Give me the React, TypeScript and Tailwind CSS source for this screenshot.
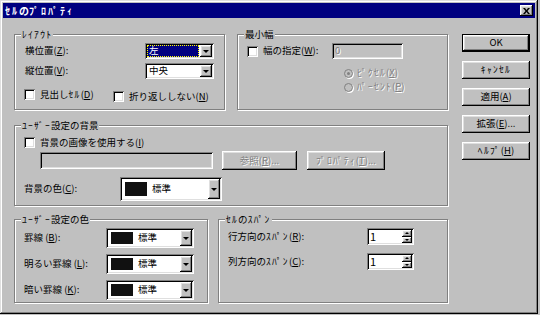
import React from "react";

// Win98 bevels
const raised =
  "shadow-[inset_-1px_-1px_0_#000,inset_1px_1px_0_#fff,inset_-2px_-2px_0_#808080,inset_2px_2px_0_#dfdfdf]";
const sunken =
  "shadow-[inset_1px_1px_0_#808080,inset_-1px_-1px_0_#fff,inset_2px_2px_0_#000,inset_-2px_-2px_0_#dfdfdf]";
const disabledText = "text-[#808080] [text-shadow:1px_1px_0_#fff]";

// half-width katakana runs are rendered wider in the original UI font
function K({ children }: { children: React.ReactNode }) {
  return <span className="tracking-[1.3px]">{children}</span>;
}

function Group({ title, className, children }: { title: React.ReactNode; className: string; children?: React.ReactNode }) {
  return (
    <div className={`border border-[#808080] shadow-[1px_1px_0_#fff,inset_1px_1px_0_#fff] ${className}`}>
      <div className="-mt-[7px] ml-[6px] w-fit bg-[#c0c0c0] px-[1px] leading-[12px]">{title}</div>
      {children}
    </div>
  );
}

function Check() {
  return <span className={`block w-[11px] h-[11px] shrink-0 bg-white ${sunken}`} />;
}

function Radio({ checked }: { checked?: boolean }) {
  return (
    <span className="flex w-[9px] h-[9px] shrink-0 items-center justify-center rounded-full border border-[#808080] bg-[#c0c0c0] shadow-[1px_1px_0_#fff]">
      {checked && <span className="block w-[3px] h-[3px] rounded-full bg-[#808080]" />}
    </span>
  );
}

function DropBtn() {
  return (
    <span className={`flex w-[12px] self-stretch shrink-0 items-center justify-center bg-[#c0c0c0] ${raised}`}>
      <span className="block border-x-[3px] border-t-[3px] border-x-transparent border-t-black" />
    </span>
  );
}

function ColorCombo({ className, swatch }: { className: string; swatch: string }) {
  return (
    <div className={`flex items-stretch bg-white p-[2px] ${sunken} ${className}`}>
      <div className="flex flex-1 items-center">
        <span className={`block w-[22px] bg-[#111] ${swatch}`} />
        <span className="ml-[5px]">標準</span>
      </div>
      <DropBtn />
    </div>
  );
}

function Spinner() {
  return (
    <div className={`flex w-[47px] h-[17px] items-stretch bg-white p-[2px] ${sunken}`}>
      <span className="flex-1 pl-[1px] text-[11px] leading-[13px]">1</span>
      <div className="flex w-[10px] flex-col">
        <span className={`flex flex-1 items-center justify-center bg-[#c0c0c0] ${raised}`}>
          <span className="block border-x-[2px] border-b-[2px] border-x-transparent border-b-black" />
        </span>
        <span className={`flex flex-1 items-center justify-center bg-[#c0c0c0] ${raised}`}>
          <span className="block border-x-[2px] border-t-[2px] border-x-transparent border-t-black" />
        </span>
      </div>
    </div>
  );
}

function Button({ children, isDefault, disabled, className = "" }: { children: React.ReactNode; isDefault?: boolean; disabled?: boolean; className?: string }) {
  return (
    <div className={`${isDefault ? "border border-black" : ""} ${className}`}>
      <div className={`flex h-full items-center justify-center bg-[#c0c0c0] ${raised} ${disabled ? disabledText : ""}`}>
        {children}
      </div>
    </div>
  );
}

export default function App() {
  return (
    <div className="w-[540px] h-[315px] overflow-hidden bg-[#c0c0c0] font-['Noto_Sans_CJK_JP','Noto_Sans',sans-serif] text-[9.5px] leading-none text-black">
      <div className="flex w-[538px] h-[314px] flex-col p-[3px] shadow-[inset_-1px_-1px_0_#000,inset_1px_1px_0_#dfdfdf,inset_-2px_-2px_0_#808080,inset_2px_2px_0_#fff]">
        {/* TITLE BAR */}
        <div className="flex h-[15px] items-center justify-between bg-[#000080] pl-[2px] pr-[2px]">
          <span className="text-[10px] font-bold text-white">
            <span className="tracking-[2px]">ｾﾙ</span>の<span className="tracking-[2px]">ﾌﾟﾛﾊﾟﾃｨ</span>
          </span>
          <span className={`flex w-[13px] h-[11px] items-center justify-center bg-[#c0c0c0] ${raised}`}>
            <svg width="7" height="6" viewBox="0 0 7 6">
              <path d="M0 0h2l1.5 2L5 0h2L4.5 3 7 6H5L3.5 4 2 6H0l2.5-3z" fill="#000" />
            </svg>
          </span>
        </div>

        <div className="flex">
          {/* LEFT COLUMN */}
          <div className="ml-[11px] mt-[16px] flex w-[434px] flex-col">
            <div className="flex gap-[12px]">
              <Group title={<K>ﾚｲｱｳﾄ</K>} className="w-[211px] h-[76px]">
                <div className="mt-[3px] flex h-[16px] items-center pl-[10px]">
                  <span className="w-[120px]">
                    横位置(<u>Z</u>):
                  </span>
                  <div className={`flex w-[69px] h-[16px] items-stretch bg-white p-[2px] ${sunken}`}>
                    <div className="flex flex-1 items-center pr-[1px]">
                      <div className="flex h-full flex-1 items-center border border-dotted border-[#ffff00] bg-[#000080] pl-[1px] text-white">
                        左
                      </div>
                    </div>
                    <DropBtn />
                  </div>
                </div>
                <div className="mt-[4px] flex h-[16px] items-center pl-[10px]">
                  <span className="w-[120px]">
                    縦位置(<u>V</u>):
                  </span>
                  <div className={`flex w-[69px] h-[16px] items-stretch bg-white p-[2px] ${sunken}`}>
                    <div className="flex flex-1 items-center pl-[2px]">中央</div>
                    <DropBtn />
                  </div>
                </div>
                <div className="mt-[10px] flex items-start pl-[9px]">
                  <div className="flex w-[89px] items-center gap-[5px]">
                    <Check />
                    <span>
                      見出し<K>ｾﾙ</K>(<u>D</u>)
                    </span>
                  </div>
                  <div className="mt-[2px] flex items-center gap-[5px]">
                    <Check />
                    <span>
                      折り返ししない(<u>N</u>)
                    </span>
                  </div>
                </div>
              </Group>

              <Group title="最小幅" className="w-[211px] h-[76px]">
                <div className="mt-[3px] flex h-[16px] items-center pl-[9px]">
                  <div className="flex w-[85px] items-center gap-[5px]">
                    <Check />
                    <span>
                      幅の指定(<u>W</u>):
                    </span>
                  </div>
                  <div className={`flex w-[71px] h-[16px] items-center bg-[#c0c0c0] pl-[3px] ${sunken} ${disabledText}`}>0</div>
                </div>
                <div className={`mt-[8px] flex h-[12px] items-center gap-[4px] pl-[106px] ${disabledText}`}>
                  <Radio checked />
                  <span>
                    <K>ﾋﾟｸｾﾙ</K>(<u>X</u>)
                  </span>
                </div>
                <div className={`mt-[2px] flex h-[12px] items-center gap-[4px] pl-[106px] ${disabledText}`}>
                  <Radio />
                  <span>
                    <K>ﾊﾟｰｾﾝﾄ</K>(<u>P</u>)
                  </span>
                </div>
              </Group>
            </div>

            <Group title={<><K>ﾕｰｻﾞｰ</K>設定の背景</>} className="mt-[15px] w-[434px] h-[81px]">
              <div className="mt-[6px] flex h-[11px] items-center gap-[5px] pl-[9px]">
                <Check />
                <span>
                  背景の画像を使用する(<u>I</u>)
                </span>
              </div>
              <div className="mt-[3px] flex h-[19px] items-center pl-[25px]">
                <div className={`w-[173px] h-[17px] bg-[#c0c0c0] ${sunken}`} />
                <Button disabled className="ml-[9px] w-[75px] h-[19px]">
                  参照(<u>R</u>)...
                </Button>
                <Button disabled className="ml-[10px] w-[78px] h-[19px]">
                  <K>ﾌﾟﾛﾊﾟﾃｨ</K>(<u>T</u>)...
                </Button>
              </div>
              <div className="mt-[7px] flex h-[24px] items-center pl-[9px]">
                <span className="w-[96px]">
                  背景の色(<u>C</u>):
                </span>
                <ColorCombo className="w-[102px] h-[24px]" swatch="h-[14px] ml-[3px]" />
              </div>
            </Group>

            <div className="mt-[13px] flex gap-[10px]">
              <Group title={<><K>ﾕｰｻﾞｰ</K>設定の色</>} className="w-[194px] h-[84px]">
                {[
                  { label: "罫線 ", key: "B", mt: "mt-[3px]" },
                  { label: "明るい罫線 ", key: "L", mt: "mt-[6px]" },
                  { label: "暗い罫線 ", key: "K", mt: "mt-[6px]" },
                ].map((row) => (
                  <div key={row.key} className={`${row.mt} flex h-[20px] items-center pl-[9px]`}>
                    <span className="w-[82px]">
                      {row.label}(<u>{row.key}</u>):
                    </span>
                    <ColorCombo className="w-[88px] h-[20px]" swatch="h-[12px] ml-[3px]" />
                  </div>
                ))}
              </Group>

              <Group title={<><K>ｾﾙ</K>の<K>ｽﾊﾟﾝ</K></>} className="w-[230px] h-[84px]">
                <div className="mt-[3px] flex h-[17px] items-center pl-[9px]">
                  <span className="w-[139px]">
                    行方向の<K>ｽﾊﾟﾝ</K>(<u>R</u>):
                  </span>
                  <Spinner />
                </div>
                <div className="mt-[8px] flex h-[17px] items-center pl-[9px]">
                  <span className="w-[139px]">
                    列方向の<K>ｽﾊﾟﾝ</K>(<u>C</u>):
                  </span>
                  <Spinner />
                </div>
              </Group>
            </div>
          </div>

          {/* RIGHT BUTTONS */}
          <div className="ml-[14px] mt-[16px] flex w-[68px] flex-col gap-[9px]">
            <Button isDefault className="h-[18px]">OK</Button>
            <Button className="h-[18px]">
              <K>ｷｬﾝｾﾙ</K>
            </Button>
            <Button className="h-[18px]">
              適用(<u>A</u>)
            </Button>
            <Button className="h-[18px]">
              拡張(<u>E</u>)...
            </Button>
            <Button className="h-[18px]">
              <K>ﾍﾙﾌﾟ</K>(<u>H</u>)
            </Button>
          </div>
        </div>
      </div>
    </div>
  );
}
